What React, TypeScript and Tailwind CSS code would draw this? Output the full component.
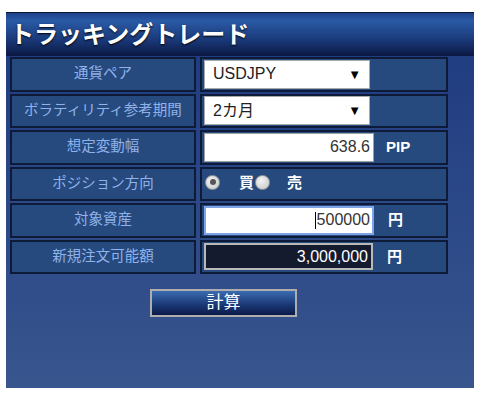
const font = { fontFamily: '"Liberation Sans", "Noto Sans CJK JP", sans-serif' }

const labels = ['通貨ペア', 'ボラティリティ参考期間', '想定変動幅', 'ポジション方向', '対象資産', '新規注文可能額']

function Radio({ checked }: { checked?: boolean }) {
  return (
    <span className="flex h-[15px] w-[15px] items-center justify-center rounded-full border border-[#9a9a9a] bg-[radial-gradient(circle_at_40%_35%,#f4f4f4,#c4c4c4)]">
      {checked && <span className="h-[6px] w-[6px] rounded-full bg-[#555]" />}
    </span>
  )
}

function Select({ value }: { value: string }) {
  return (
    <div className="flex h-[29px] w-[166px] items-center justify-between border border-[#a9a9a9] bg-white pl-[8px] pr-[8px] text-[16px] text-[#222]">
      <span>{value}</span>
      <span className="text-[13px] text-black">▼</span>
    </div>
  )
}

export default function App() {
  const values = [
    <Select value="USDJPY" />,
    <Select value="2カ月" />,
    <div className="flex items-center">
      <div className="flex h-[29px] w-[170px] items-center justify-end border border-[#a0a0a0] bg-white pr-[3px] text-[16px] text-[#333]">
        638.6
      </div>
      <span className="ml-[12px] text-[15px] font-bold text-white">PIP</span>
    </div>,
    <div className="flex h-full items-start pt-[3px] pl-[1px] text-[15px] font-bold text-white">
      <span className="mt-[3px]"><Radio checked /></span>
      <span className="ml-[19px]">買</span>
      <span className="mt-[3px] ml-[1px]"><Radio /></span>
      <span className="ml-[17px]">売</span>
    </div>,
    <div className="flex items-center">
      <div className="flex h-[29px] w-[170px] items-center justify-end border-2 border-[#7ea3e6] bg-white pr-[2px] text-[16px] text-[#333]">
        <span className="mr-[1px] h-[17px] w-[1px] bg-black" />
        500000
      </div>
      <span className="ml-[14px] text-[15px] font-bold text-white">円</span>
    </div>,
    <div className="flex items-center">
      <div className="flex h-[27px] w-[169px] items-center justify-end border-2 border-[#b9b9b9] bg-[#141b2f] pr-[3px] text-[16px] text-white">
        3,000,000
      </div>
      <span className="ml-[14px] text-[15px] font-bold text-white">円</span>
    </div>,
  ]

  return (
    <div className="h-[395px] w-[480px] bg-white pt-[12px] pl-[6px]" style={font}>
      <div className="flex h-[376px] w-[468px] flex-col bg-[linear-gradient(to_bottom,#1e3a80,#38558e)]">
        {/* Header */}
        <div className="flex h-[44px] items-center border-t border-[#0a1430] bg-[linear-gradient(to_bottom,#1d3f8a_0%,#2a5aa5_18%,#1b3b7c_60%,#0b1843_100%)] pl-[4px]">
          <h1 className="text-[24px] font-bold text-white [text-shadow:0_1px_2px_#000]">
            トラッキングトレード
          </h1>
        </div>

        {/* Form rows */}
        <div className="flex flex-col gap-[2px] pt-[1px] pl-[4px]">
          {labels.map((label, i) => (
            <div key={label} className="flex h-[34.5px] gap-[4px]">
              <div className="flex w-[186px] items-center justify-center border-2 border-[#0d1b38] bg-[#264a7e] text-[14.5px] text-[#8fb2ea]">
                {label}
              </div>
              <div className={`flex w-[248px] border-2 border-[#0d1b38] bg-[#264a7e] pl-[2px] ${i === 3 ? 'items-start' : 'items-center'}`}>
                {values[i]}
              </div>
            </div>
          ))}
        </div>

        {/* Button */}
        <div className="mt-[15px] pl-[144px]">
          <button className="flex h-[28px] w-[147px] items-center justify-center border-2 border-[#aeaeae] bg-[linear-gradient(to_bottom,#3a6cb0,#1c3a78_55%,#0c1a48)] text-[17px] text-white">
            計算
          </button>
        </div>
      </div>
    </div>
  )
}
